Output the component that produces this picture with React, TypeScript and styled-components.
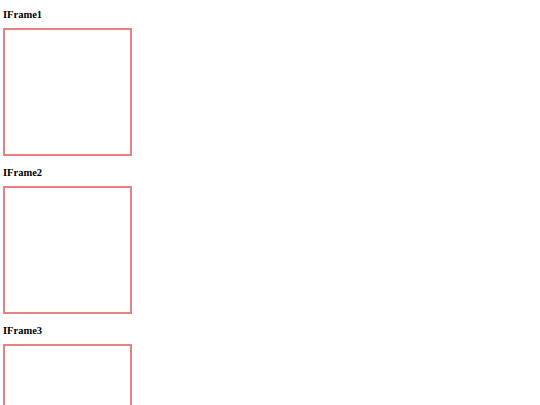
import styled, { createGlobalStyle } from "styled-components"

const GlobalStyle = createGlobalStyle`
  html, body {
    margin: 0;
    padding: 0;
    background: #ffffff;
  }
  body {
    font-family: "Liberation Serif", "Times New Roman", serif;
    color: #000000;
  }
`

const Page = styled.main`
  display: flex;
  flex-direction: column;
  gap: 9px;
  padding: 7px 3px 3px;
`

const Section = styled.section`
  display: flex;
  flex-direction: column;
  align-items: flex-start;
  gap: 7px;
`

const Title = styled.h3`
  margin: 0;
  padding-top: 2px;
  font-size: 10.5px;
  line-height: 12px;
  font-weight: bold;
`

const Frame = styled.iframe`
  display: block;
  box-sizing: border-box;
  width: 129px;
  height: 128px;
  border: 2px solid #e98080;
  background: #ffffff;
`

function App() {
  const frames = ["IFrame1", "IFrame2", "IFrame3"]

  return (
    <>
      <GlobalStyle />
      <Page>
        {frames.map((name) => {
          return (
            <Section key={name}>
              <Title>{name}</Title>
              <Frame title={name} />
            </Section>
          )
        })}
      </Page>
    </>
  )
}

export default App
